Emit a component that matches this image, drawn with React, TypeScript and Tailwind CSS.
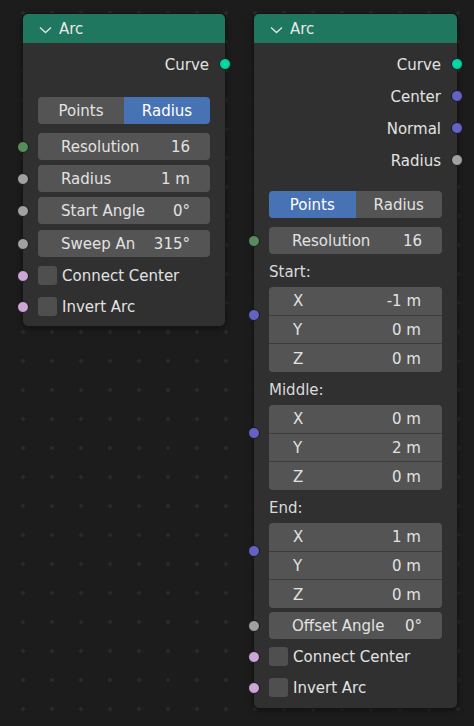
import React from "react";

type Kind = "geo" | "vec" | "float" | "int" | "bool";

const sockColor: Record<Kind, string> = {
  geo: "bg-[#00d6a3]",
  vec: "bg-[#6363c7]",
  float: "bg-[#a1a1a1]",
  int: "bg-[#598c5c]",
  bool: "bg-[#cca6d6]",
};

function Socket({ kind, side = "left", pos = "top-1/2 -translate-y-1/2" }: { kind: Kind; side?: "left" | "right"; pos?: string }) {
  const edge = side === "left" ? "left-[-6px]" : "right-[-6px]";
  return <span className={`absolute ${edge} ${pos} w-[12px] h-[12px] rounded-full border border-[#181818] ${sockColor[kind]}`} />;
}

function Header() {
  return (
    <div className="h-[29px] rounded-t-[5px] bg-[#1e775e] flex items-center pl-[16px] pt-[2px] text-[#e8e8e8]">
      <svg width="13" height="8" viewBox="0 0 13 8">
        <polyline points="1,1.5 6.5,6.5 12,1.5" fill="none" stroke="#e4e4e4" strokeWidth="1.3" />
      </svg>
      <span className="ml-[7px]">Arc</span>
    </div>
  );
}

function Output({ label, kind }: { label: string; kind: Kind }) {
  return (
    <div className="relative h-[32px] flex items-center justify-end pr-[16px] pt-[2px]">
      <span>{label}</span>
      <Socket kind={kind} side="right" />
    </div>
  );
}

function Toggle({ active }: { active: "Points" | "Radius" }) {
  return (
    <div className="px-[15px]">
      <div className="h-[27px] flex rounded-[4px] overflow-hidden">
        {(["Points", "Radius"] as const).map((t) => (
          <div key={t} className={`flex-1 flex items-center justify-center pt-[2px] ${t === active ? "bg-[#4772b3] text-white" : "bg-[#545454]"}`}>
            {t}
          </div>
        ))}
      </div>
    </div>
  );
}

function Field({ label, value, kind, className = "" }: { label: string; value: string; kind?: Kind; className?: string }) {
  return (
    <div className={`relative px-[15px] ${className}`}>
      {kind && <Socket kind={kind} />}
      <div className="h-[27px] rounded-[4px] bg-[#545454] flex items-center justify-between pl-[23px] pr-[20px] pt-[2px]">
        <span className="whitespace-nowrap">{label}</span>
        <span className="whitespace-nowrap">{value}</span>
      </div>
    </div>
  );
}

function Check({ label }: { label: string }) {
  return (
    <div className="relative h-[31px] flex items-center px-[15px]">
      <Socket kind="bool" />
      <span className="w-[19px] h-[19px] rounded-[3px] bg-[#4f4f4f]" />
      <span className="ml-[5px] pt-[2px]">{label}</span>
    </div>
  );
}

function Vector({ title, values }: { title: string; values: string[] }) {
  return (
    <>
      <div className="h-[33px] flex items-center pt-[4px] px-[15px] text-[#dadada]">{title}</div>
      <div className="relative px-[15px]">
        <Socket kind="vec" pos="top-[22px]" />
        <div className="h-[85px] rounded-[4px] overflow-hidden bg-[#3c3c3c] flex flex-col gap-[1px]">
          {["X", "Y", "Z"].map((axis, i) => (
            <div key={axis} className="flex-1 bg-[#545454] flex items-center justify-between pl-[24px] pr-[21px] pt-[2px]">
              <span>{axis}</span>
              <span>{values[i]}</span>
            </div>
          ))}
        </div>
      </div>
    </>
  );
}

const nodeShell = "absolute top-[14px] rounded-[5px] bg-[#303030] shadow-[0_0_0_1px_#151515,0_2px_6px_rgba(0,0,0,0.5)]";

export default function App() {
  return (
    <div className="relative w-[474px] h-[726px] overflow-hidden bg-[#1c1c1c] bg-[radial-gradient(circle,#2c2c2c_1.8px,transparent_2.2px)] bg-[length:29px_29px] bg-[position:8.5px_-1.5px] font-['DejaVu_Sans',sans-serif] text-[15px] leading-none text-[#e2e2e2]">
      {/* radius mode */}
      <div className={`${nodeShell} left-[23px] w-[202px]`}>
        <Header />
        <div className="pt-[5px] pb-[4px]">
          <Output label="Curve" kind="geo" />
          <div className="mt-[17px]">
            <Toggle active="Radius" />
          </div>
          <Field className="mt-[9px]" label="Resolution" value="16" kind="int" />
          <Field className="mt-[5px]" label="Radius" value="1 m" kind="float" />
          <Field className="mt-[5px]" label="Start Angle" value="0°" kind="float" />
          <Field className="mt-[6px]" label="Sweep An" value="315°" kind="float" />
          <div className="mt-[3px]">
            <Check label="Connect Center" />
            <Check label="Invert Arc" />
          </div>
        </div>
      </div>

      {/* points mode */}
      <div className={`${nodeShell} left-[254px] w-[203px]`}>
        <Header />
        <div className="pt-[5px] pb-[5px]">
          <Output label="Curve" kind="geo" />
          <Output label="Center" kind="vec" />
          <Output label="Normal" kind="vec" />
          <Output label="Radius" kind="float" />
          <div className="mt-[15px]">
            <Toggle active="Points" />
          </div>
          <Field className="mt-[9px]" label="Resolution" value="16" kind="int" />
          <Vector title="Start:" values={["-1 m", "0 m", "0 m"]} />
          <Vector title="Middle:" values={["0 m", "2 m", "0 m"]} />
          <Vector title="End:" values={["1 m", "0 m", "0 m"]} />
          <Field className="mt-[4px]" label="Offset Angle" value="0°" kind="float" />
          <div className="mt-[2px]">
            <Check label="Connect Center" />
            <Check label="Invert Arc" />
          </div>
        </div>
      </div>
    </div>
  );
}
